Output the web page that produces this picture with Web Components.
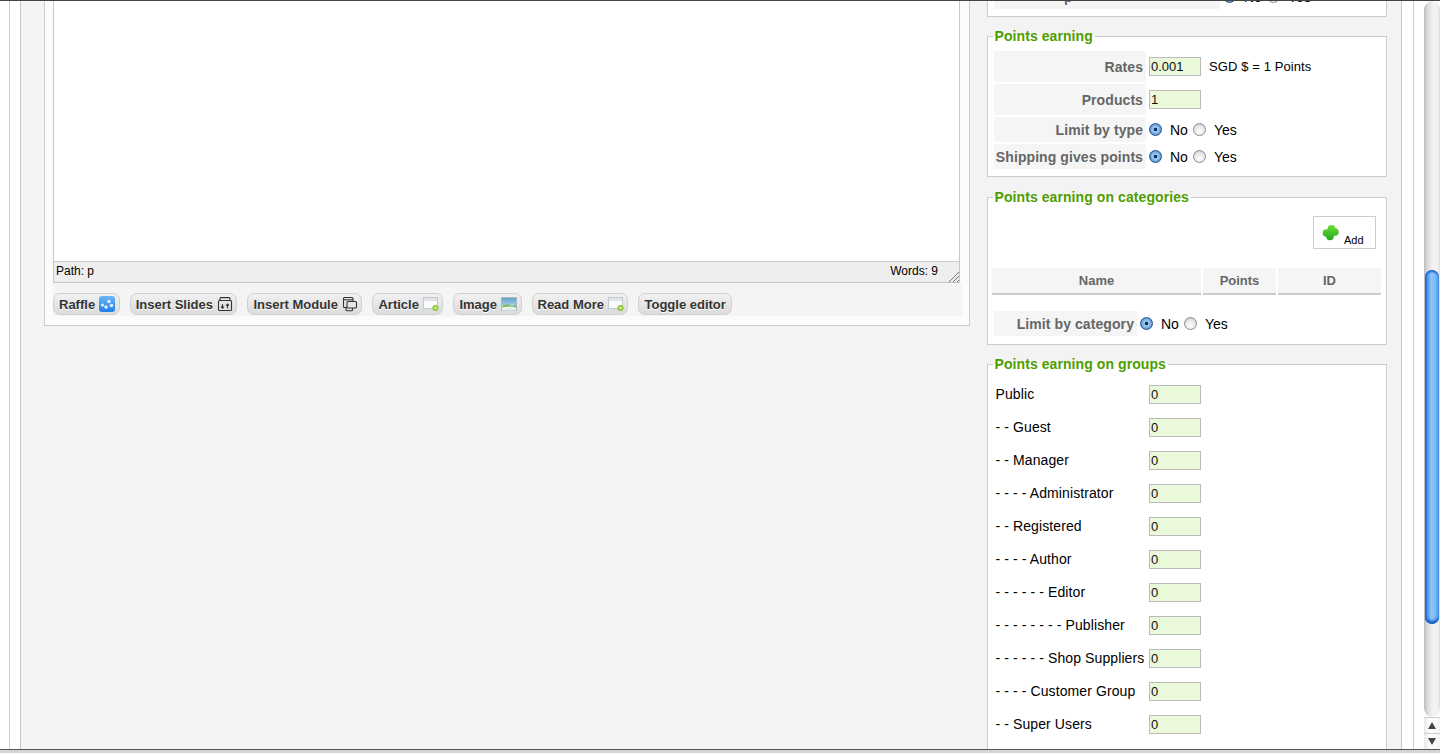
<!DOCTYPE html>
<html>
<head>
<meta charset="utf-8">
<title>Points settings</title>
<style>
  html, body { margin: 0; height: 100%; overflow: hidden; background: #fff; }
</style>
</head>
<body>

<admin-shell>
  <editor-panel slot="left" path="Path: p" words="Words: 9">
    <editor-button>Raffle<svg slot="icon" width="16" height="16" viewBox="0 0 16 16"><defs><linearGradient id="rb" x1="0" y1="0" x2="0" y2="1"><stop offset="0" stop-color="#6db7f5"/><stop offset="1" stop-color="#1f7de6"/></linearGradient></defs><rect width="16" height="16" rx="3" fill="url(#rb)"/><circle cx="3.5" cy="9" r="1.6" fill="#fff" opacity=".85"/><circle cx="7" cy="11" r="1.8" fill="#fff" opacity=".85"/><circle cx="10" cy="5.5" r="1.7" fill="#fff" opacity=".85"/><circle cx="12.5" cy="9.5" r="1.8" fill="#fff" opacity=".85"/></svg></editor-button>
    <editor-button>Insert Slides<svg slot="icon" width="16" height="16" viewBox="0 0 16 16" fill="none" stroke="#333" stroke-width="1.1"><path d="M3 4.5V2.6q0-1 1-1h8q1 0 1 1v1.9"/><rect x="1.5" y="4.5" width="13" height="10" rx="1"/><path d="M5.5 8v4M4 10.6l1.5 1.6L7 10.6M10.5 12.2v-4M9 9.7l1.5-1.6L12 9.7"/></svg></editor-button>
    <editor-button>Insert Module<svg slot="icon" width="16" height="16" viewBox="0 0 16 16" stroke="#333" stroke-width="1.1"><rect x="1.5" y="1.5" width="9.500" height="10" rx="1" fill="none"/><path d="M1.500 3.800h9.500" fill="none"/><rect x="5" y="5.500" width="9.500" height="6.500" rx="1" fill="#e6e6e6"/><path d="M4 11.500v2.500q0 .8 1 .8h4.500q1 0 1-1V12" fill="none"/></svg></editor-button>
    <editor-button>Article<page-icon slot="icon"></page-icon></editor-button>
    <editor-button>Image<svg slot="icon" width="16" height="14" viewBox="0 0 16 14"><defs><linearGradient id="im" x1="0" y1="0" x2="0" y2="1"><stop offset="0" stop-color="#5d9fc9"/><stop offset="1" stop-color="#d5e8f2"/></linearGradient></defs><rect x=".5" y=".5" width="15" height="13" fill="url(#im)" stroke="#a9b9c4"/><path d="M1 10q4-4 8-1.500t6-1.500v3.500H1z" fill="#6fb53e"/><path d="M1 10.500q6-2 14 0v3H1z" fill="#e9eef0"/></svg></editor-button>
    <editor-button>Read More<page-icon slot="icon"></page-icon></editor-button>
    <editor-button>Toggle editor</editor-button>
  </editor-panel>

  <div slot="right">
    <points-fieldset>
      <points-row style="--label-width:226px;--label-align:flex-start;--label-pad:70px;margin-bottom:0">p<radio-pair slot="value"></radio-pair></points-row>
    </points-fieldset>

    <points-fieldset legend="Points earning" style="margin-bottom:12px">
      <points-row>Rates<points-input slot="value">0.001</points-input><small-note slot="value">SGD $ = 1 Points</small-note></points-row>
      <points-row>Products<points-input slot="value">1</points-input></points-row>
      <points-row>Limit by type<radio-pair slot="value"></radio-pair></points-row>
      <points-row style="margin-bottom:0">Shipping gives points<radio-pair slot="value"></radio-pair></points-row>
    </points-fieldset>

    <points-fieldset legend="Points earning on categories">
      <add-button>Add</add-button>
      <category-table></category-table>
      <points-row style="--label-width:143px;margin-bottom:1px">Limit by category<radio-pair slot="value"></radio-pair></points-row>
    </points-fieldset>

    <points-fieldset legend="Points earning on groups">
      <group-row style="margin-top:-2px">Public</group-row>
      <group-row>- - Guest</group-row>
      <group-row>- - Manager</group-row>
      <group-row>- - - - Administrator</group-row>
      <group-row>- - Registered</group-row>
      <group-row>- - - - Author</group-row>
      <group-row>- - - - - - Editor</group-row>
      <group-row>- - - - - - - - Publisher</group-row>
      <group-row>- - - - - - Shop Suppliers</group-row>
      <group-row>- - - - Customer Group</group-row>
      <group-row style="margin-bottom:20px">- - Super Users</group-row>
    </points-fieldset>
  </div>
</admin-shell>

<script>
function makeTemplate(html) {
  const t = document.createElement('template');
  t.innerHTML = html;
  return t;
}

function defineSimple(name, html) {
  const tpl = makeTemplate(html);
  customElements.define(name, class extends HTMLElement {
    constructor() {
      super();
      this.attachShadow({ mode: 'open' });
      this.shadowRoot.appendChild(tpl.content.cloneNode(true));
    }
  });
}

defineSimple('admin-shell', `
  <style>
    :host { display: flex; flex-direction: column; height: 753px; overflow: hidden;
      font-family: "Liberation Sans", Arial, sans-serif; color: #000; }
    .topline { height: 1px; background: #444; flex: none; }
    .middle { flex: 1; display: flex; min-height: 0; }
    .page { flex: 1; min-width: 0; overflow: hidden; padding-left: 9px; }
    .wrap { box-sizing: border-box; width: 1405px; height: 100%; border: solid #ccc; border-width: 0 1px;
      padding: 0 11px 0 10px; }
    .gray { height: 100%; overflow: hidden; background: #f3f3f3; border: solid #c8c8c8; border-width: 0 1px;
      display: flex; align-items: flex-start; gap: 17px; padding-left: 23px; }
    .left { flex: none; margin-top: -31px; }
    .right { flex: none; width: 400px; margin-top: -25px; }
    .bottomline { flex: none; height: 1px; background: #555; }
    .bottomband { flex: none; height: 3px; background: #d4d4d4; }
  </style>
  <div class="topline"></div>
  <div class="middle">
    <div class="page"><div class="wrap"><div class="gray">
      <div class="left"><slot name="left"></slot></div>
      <div class="right"><slot name="right"></slot></div>
    </div></div></div>
    <aqua-scrollbar></aqua-scrollbar>
  </div>
  <div class="bottomline"></div>
  <div class="bottomband"></div>
`);

defineSimple('aqua-scrollbar', `
  <style>
    :host { display: flex; flex-direction: column; flex: none; width: 16px; background: #fff; }
    .track { flex: 1; min-height: 0; padding-top: 269px; border-radius: 8px 8px 8px 8px / 9px 9px 9px 9px;
      background: linear-gradient(90deg, #bdbdbd 0, #dedede 25%, #f4f4f4 60%, #f0f0f0 85%, #ddd 100%); box-sizing: border-box; }
    .thumb { height: 354px; margin: 0 1px; border-radius: 7px;
      background: linear-gradient(90deg, #1d62cf 0, #4b97ea 18%, #93c6f7 45%, #7fbcf5 70%, #4a9af0 100%);
      box-shadow: inset 0 -4px 3px -1px #1459c4, inset 0 3px 2px -1px #1c63cf; }
    .btn { flex: none; height: 16px; display: flex; align-items: center; justify-content: center;
      background: linear-gradient(90deg, #e8e8e8, #fff 40%, #f4f4f4); border-top: 1px solid #cfcfcf; box-sizing: border-box; }
    .up { border: solid transparent; border-width: 0 4.500px 7px; border-bottom-color: #444; }
    .down { border: solid transparent; border-width: 7px 4.500px 0; border-top-color: #444; }
  </style>
  <div class="track"><div class="thumb"></div></div>
  <div class="btn"><div class="up"></div></div>
  <div class="btn"><div class="down"></div></div>
`);

const editorTemplate = makeTemplate(`
  <style>
    :host { display: block; box-sizing: border-box; width: 926px; border: 1px solid #ccc; background: #fbfbfb;
      padding: 0 8px 9px 8px; }
    .frame { width: 907px; box-sizing: border-box; border: 1px solid #c8c8c8; border-bottom-color: #c4c4c4; }
    .area { height: 289px; background: #fff; }
    .status { height: 18px; display: flex; justify-content: space-between; align-items: center; position: relative;
      background: #eee; border-top: 1px solid #ccc; font-size: 12px; padding: 0 21px 2px 2px; }
    .grip { position: absolute; right: 0; bottom: 0; }
    .buttons { display: flex; gap: 10px; background: #f4f4f4; padding: 10px 0 1px; width: 909px; }
  </style>
  <div class="frame">
    <div class="area"></div>
    <div class="status">
      <span class="path"></span><span class="words"></span>
      <svg class="grip" width="11" height="11" viewBox="0 0 11 11" stroke="#777" stroke-width="1"><path d="M1 11 11 1M5 11l6-6M9 11l2-2"/></svg>
    </div>
  </div>
  <div class="buttons"><slot></slot></div>
`);

class EditorPanel extends HTMLElement {
  constructor() {
    super();
    this.attachShadow({ mode: 'open' });
    this.shadowRoot.appendChild(editorTemplate.content.cloneNode(true));
    this.shadowRoot.querySelector('.path').textContent = this.getAttribute('path');
    this.shadowRoot.querySelector('.words').textContent = this.getAttribute('words');
  }
}
customElements.define('editor-panel', EditorPanel);

defineSimple('editor-button', `
  <style>
    :host { display: inline-flex; align-items: center; gap: 4px; box-sizing: border-box; height: 22px; padding: 0 3.5px 0 5px;
      border: 1px solid #d0d0d0; border-radius: 7px; background: linear-gradient(#f2f2f2, #e6e6e6 45%, #dcdcdc);
      font-size: 13px; font-weight: bold; color: #333; text-shadow: 0 1px 0 #fff; white-space: nowrap; }
    :host(:last-child) { padding: 0 5px; }
    ::slotted(svg), ::slotted(page-icon) { flex: none; }
  </style>
  <slot></slot><slot name="icon"></slot>
`);

defineSimple('page-icon', `
  <style>
    :host { display: block; width: 16px; height: 14px; }
    svg { display: block; }
  </style>
  <svg width="16" height="14" viewBox="0 0 16 14">
    <rect x=".5" y=".5" width="14" height="11" fill="#fafafa" stroke="#c3c9d0"/>
    <rect x="1" y="1" width="13" height="3" fill="#dfe4ea"/>
    <circle cx="12.500" cy="11" r="2.800" fill="#9ad13a" stroke="#7fb52a" stroke-width=".6"/>
    <circle cx="12.500" cy="11" r="1.100" fill="#eaf7c8"/>
  </svg>
`);

const fieldsetTemplate = makeTemplate(`
  <style>
    :host { display: block; margin-bottom: 11px; }
    fieldset { margin: 0; min-width: 0; background: #fff; border: 1px solid #ccc; padding: 7px 5px 7px 6px; }
    legend { margin-left: -1.5px; padding: 0 2px; font-size: 14px; line-height: 16px; font-weight: bold; color: #4f9e00;
      letter-spacing: .08px; }
  </style>
  <fieldset><legend></legend><slot></slot></fieldset>
`);

class PointsFieldset extends HTMLElement {
  constructor() {
    super();
    this.attachShadow({ mode: 'open' });
    this.shadowRoot.appendChild(fieldsetTemplate.content.cloneNode(true));
    const legend = this.shadowRoot.querySelector('legend');
    if (this.hasAttribute('legend')) legend.textContent = this.getAttribute('legend');
    else legend.remove();
  }
}
customElements.define('points-fieldset', PointsFieldset);

defineSimple('points-row', `
  <style>
    :host { display: flex; align-items: stretch; margin-bottom: 2px; }
    .label { flex: none; box-sizing: border-box; width: var(--label-width, 152px); min-height: 25px;
      display: flex; align-items: center; justify-content: var(--label-align, flex-end);
      padding: 0 3px 0 var(--label-pad, 0); background: #f5f5f5;
      font-size: 14px; font-weight: bold; color: #666; white-space: nowrap; letter-spacing: .08px; }
    .value { flex: 1; display: flex; align-items: center; gap: 8px; padding-left: 3px; }
  </style>
  <div class="label"><slot></slot></div>
  <div class="value"><slot name="value"></slot></div>
`);

defineSimple('points-input', `
  <style>
    :host { display: block; flex: none; box-sizing: border-box; width: 52px; height: 19px; margin: 6px 0;
      border: 1px solid #bbb; background: #e9f9d9; font-size: 13px; line-height: 18px; padding-left: 1px; color: #111; }
  </style>
  <slot></slot>
`);

defineSimple('small-note', `
  <style>
    :host { display: block; font-size: 13px; white-space: nowrap; letter-spacing: .1px; }
  </style>
  <slot></slot>
`);

defineSimple('radio-dot', `
  <style>
    :host { display: block; flex: none; width: 13px; height: 13px; box-sizing: border-box; border-radius: 50%;
      border: 1px solid #8b8b8b; background: radial-gradient(circle at 50% 70%, #fff, #e4e4e4 60%, #bdbdbd); }
    :host([checked]) { border-color: #24528c;
      background: radial-gradient(circle at 50% 50%, #0f2f5c 0, #0f2f5c 20%, #a9cdf0 27%, #6ea6e0 60%, #2f70ba 100%); }
  </style>
`);

defineSimple('radio-pair', `
  <style>
    :host { display: flex; align-items: center; font-size: 14px; white-space: nowrap; }
    .no { margin: 0 5px 0 8px; }
    .yes { margin-left: 8px; }
  </style>
  <radio-dot checked></radio-dot><span class="no">No</span>
  <radio-dot></radio-dot><span class="yes">Yes</span>
`);

defineSimple('add-button', `
  <style>
    :host { display: flex; box-sizing: border-box; width: 63px; height: 33px; margin: 4px 5px 19px auto;
      border: 1px solid #ccc; background: #fff; padding: 7px 0 0 8px; font-size: 11px; }
    span { margin: 10px 0 0 4px; line-height: 13px; }
    svg { flex: none; }
  </style>
  <svg width="18" height="18" viewBox="0 0 18 18">
    <defs><linearGradient id="pl" gradientUnits="userSpaceOnUse" x1="0" y1="1" x2="0" y2="17"><stop offset="0" stop-color="#6fdc3a"/><stop offset="1" stop-color="#1fa51a"/></linearGradient></defs>
    <g fill="url(#pl)"><circle cx="9.500" cy="5" r="4"/><circle cx="13" cy="8" r="3.800"/><circle cx="8" cy="12.500" r="3.800"/><circle cx="4.500" cy="9" r="3.800"/><circle cx="9" cy="9" r="4"/></g>
  </svg><span><slot></slot></span>
`);

defineSimple('category-table', `
  <style>
    :host { display: grid; grid-template-columns: 209px 73px 103px; gap: 2px; width: 389px; margin: 0 0 16px -2px; }
    div { height: 27px; box-sizing: border-box; border-bottom: 2px solid #ccc; background: #f5f5f5; padding-bottom: 1px;
      display: flex; align-items: center; justify-content: center;
      font-size: 13px; font-weight: bold; color: #666; }
  </style>
  <div>Name</div><div>Points</div><div>ID</div>
`);

defineSimple('group-row', `
  <style>
    :host { display: flex; align-items: center; height: 33px; font-size: 14px; }
    .label { flex: none; width: 155px; padding-left: 1.5px; box-sizing: border-box; white-space: pre; letter-spacing: .1px; }
    points-input { margin: 1px 0 0; }
  </style>
  <div class="label"><slot></slot></div>
  <points-input>0</points-input>
`);
</script>
</body>
</html>
